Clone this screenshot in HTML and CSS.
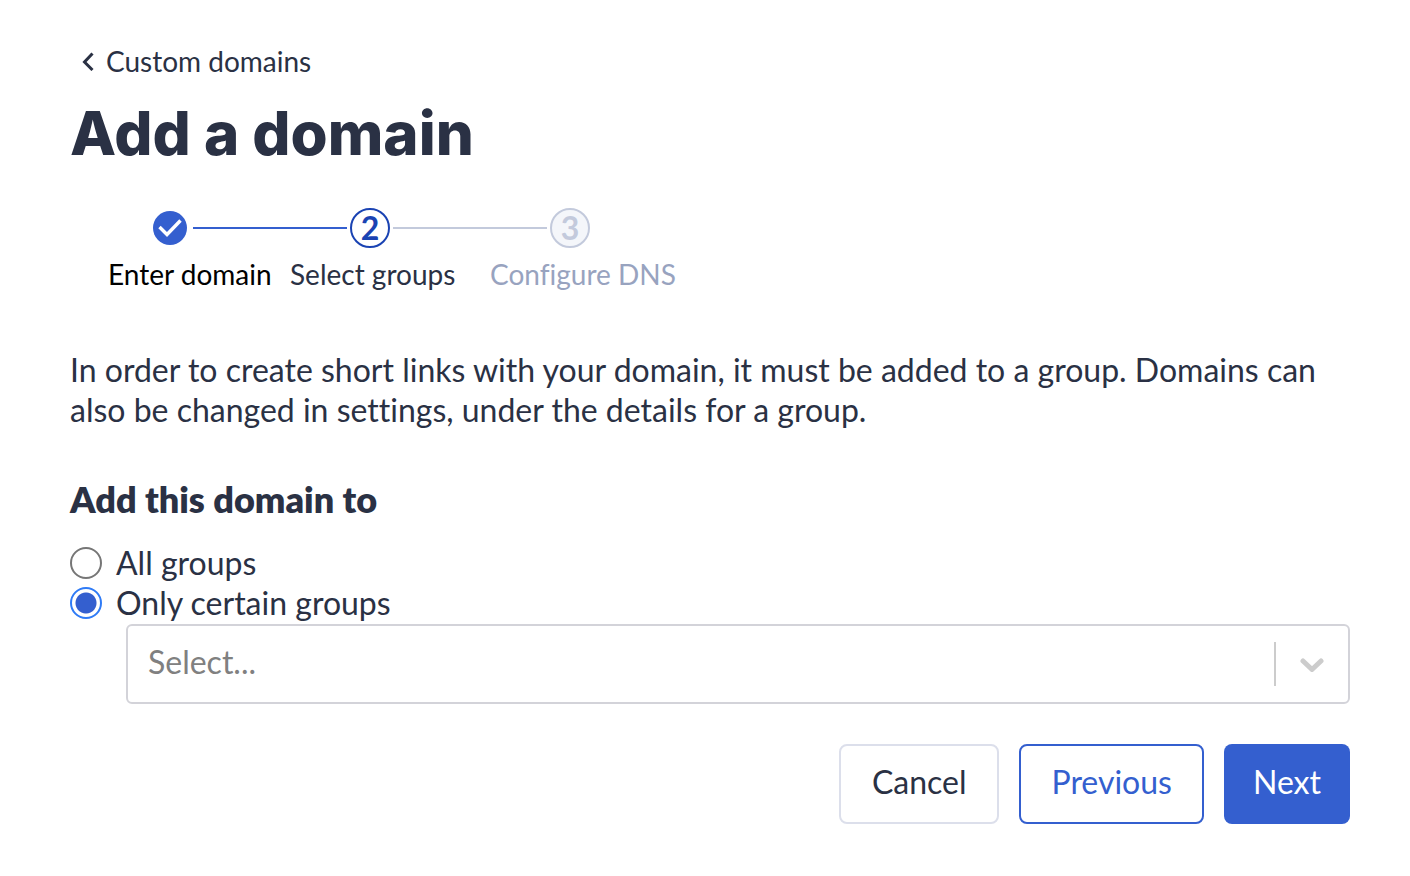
FILE: index.html
```html
<!DOCTYPE html>
<html lang="en">
<head>
<meta charset="utf-8">
<meta name="viewport" content="width=device-width, initial-scale=1">
<title>Add a domain</title>
<link rel="stylesheet" href="styles.css">
</head>
<body>
<main class="page">
  <a class="back" href="#domains">
    <svg class="back-icon" viewBox="0 0 12 20" aria-hidden="true"><path d="M10.500 2.500 2.500 11l8 8"/></svg>
    <span>Custom domains</span>
  </a>
  <h1 class="title">Add a domain</h1>

  <ol class="steps">
    <li class="step step-done">
      <span class="marker">
        <svg class="check" viewBox="0 0 34 34" aria-hidden="true"><circle cx="17" cy="17" r="17"/><path d="M6.500 16l7.500 7.500L27.500 9.500"/></svg>
      </span>
      <span class="step-label">Enter domain</span>
    </li>
    <li class="step step-current" aria-current="step">
      <span class="marker"><span class="number">2</span></span>
      <span class="step-label">Select groups</span>
    </li>
    <li class="step step-next">
      <span class="marker"><span class="number">3</span></span>
      <span class="step-label">Configure DNS</span>
    </li>
  </ol>

  <p class="intro">In order to create short links with your domain, it must be added to a group. Domains can also be changed in settings, under the details for a group.</p>

  <form class="form">
    <fieldset class="choices">
      <legend class="legend">Add this domain to</legend>
      <label class="choice"><input class="radio" type="radio" name="scope" value="all"><span>All groups</span></label>
      <label class="choice"><input class="radio" type="radio" name="scope" value="some" checked><span>Only certain groups</span></label>
      <div class="select-box">
        <select class="select" aria-label="Groups">
          <option value="">Select...</option>
        </select>
        <svg class="chevron" viewBox="0 0 24 16" aria-hidden="true"><path d="M3 5l9 8.500L21 5"/></svg>
      </div>
    </fieldset>
    <div class="actions">
      <button class="button button-cancel" type="button">Cancel</button>
      <button class="button button-previous" type="button">Previous</button>
      <button class="button button-next" type="submit">Next</button>
    </div>
  </form>
</main>
</body>
</html>
```
FILE: styles.css
```css
* {
  box-sizing: border-box;
}

body {
  margin: 0;
  background: #fff;
  color: #2a3144;
  font: 32px/40px Lato, "Open Sans", sans-serif;
  font-variant-ligatures: none;
}

.page {
  padding: 43px 60px 52px 70px;
}

.back {
  display: flex;
  align-items: center;
  gap: 12px;
  width: fit-content;
  padding-left: 12px;
  color: inherit;
  font-size: 28px;
  line-height: 36px;
  text-decoration: none;
}

.back-icon {
  width: 12px;
  height: 20px;
  fill: none;
  stroke: currentColor;
  stroke-width: 3;
}

.title {
  margin: 18px 0 0;
  font-family: Inter, sans-serif;
  font-size: 60px;
  font-weight: 800;
  line-height: 72px;
}

.steps {
  display: flex;
  margin: 39px 0 0;
  padding: 0;
  list-style: none;
}

.step {
  display: flex;
  flex-direction: column;
  flex: 0 0 200px;
  gap: 8px;
  min-width: 0;
}

.marker {
  display: flex;
  align-items: center;
  gap: 3px;
}

.marker::before,
.marker::after {
  content: "";
  flex: 1;
  height: 2px;
  background: #c3cadc;
}

.step-done .marker::before,
.step-next .marker::after {
  background: none;
}

.step-done .marker::after,
.step-current .marker::before {
  background: #345fcf;
}

.check {
  width: 40px;
  height: 40px;
  padding: 3px;
}

.check circle {
  fill: #345fcf;
}

.check path {
  fill: none;
  stroke: #fff;
  stroke-width: 3.4;
}

.number {
  width: 40px;
  height: 40px;
  border: 2px solid #c3cadc;
  border-radius: 50%;
  background: #f4f6fa;
  color: #c3cadc;
  font-weight: 700;
  line-height: 36px;
  text-align: center;
}

.step-current .number {
  border-color: #1a43b3;
  background: #fff;
  color: #1a43b3;
}

.step-label {
  padding-left: 20px;
  font-size: 28px;
  line-height: 36px;
  white-space: nowrap;
}

.step-done .step-label {
  padding-left: 38px;
  color: #000;
}

.step-next .step-label {
  color: #98a3bf;
}

.intro {
  margin: 58px 0 47px;
}

.choices {
  margin: 0;
  padding: 0;
  border: 0;
}

.legend {
  padding: 0 0 22px;
  font-size: 36px;
  font-weight: 800;
  line-height: 44px;
}

.choice {
  display: flex;
  align-items: center;
  gap: 14px;
}

.radio {
  appearance: none;
  width: 32px;
  height: 32px;
  margin: 0;
  border: 2px solid #767676;
  border-radius: 50%;
  background: #fff;
}

.radio:checked {
  border-color: #2f7bf6;
  background: radial-gradient(circle, #345fcf 10px, #fff 11px);
}

.select-box {
  display: grid;
  align-items: center;
  margin: 1px 0 0 56px;
}

.select {
  grid-area: 1 / 1;
  appearance: none;
  width: 100%;
  height: 80px;
  padding: 0 80px 4px 20px;
  border: 2px solid #d3d3d9;
  border-radius: 6px;
  background: #fff;
  color: #808080;
  font: inherit;
}

.chevron {
  grid-area: 1 / 1;
  justify-self: end;
  box-sizing: content-box;
  width: 24px;
  height: 16px;
  padding: 14px 24px;
  margin-right: 2px;
  border-left: 2px solid #ccc;
  fill: none;
  stroke: #ccc;
  stroke-width: 5;
  stroke-linecap: round;
  stroke-linejoin: round;
  pointer-events: none;
}

.actions {
  display: flex;
  justify-content: flex-end;
  gap: 20px;
  margin-top: 40px;
}

.button {
  height: 80px;
  padding: 0 30px 4px;
  border: 2px solid #345fcf;
  border-radius: 8px;
  background: #fff;
  color: #345fcf;
  font: inherit;
}

.button-cancel {
  padding: 0 31px 4px;
  border-color: #dcdfeb;
  color: #2a3144;
}

.button-next {
  padding: 0 29px 4px;
  border: 0;
  background: #345fcf;
  color: #fff;
}
```
